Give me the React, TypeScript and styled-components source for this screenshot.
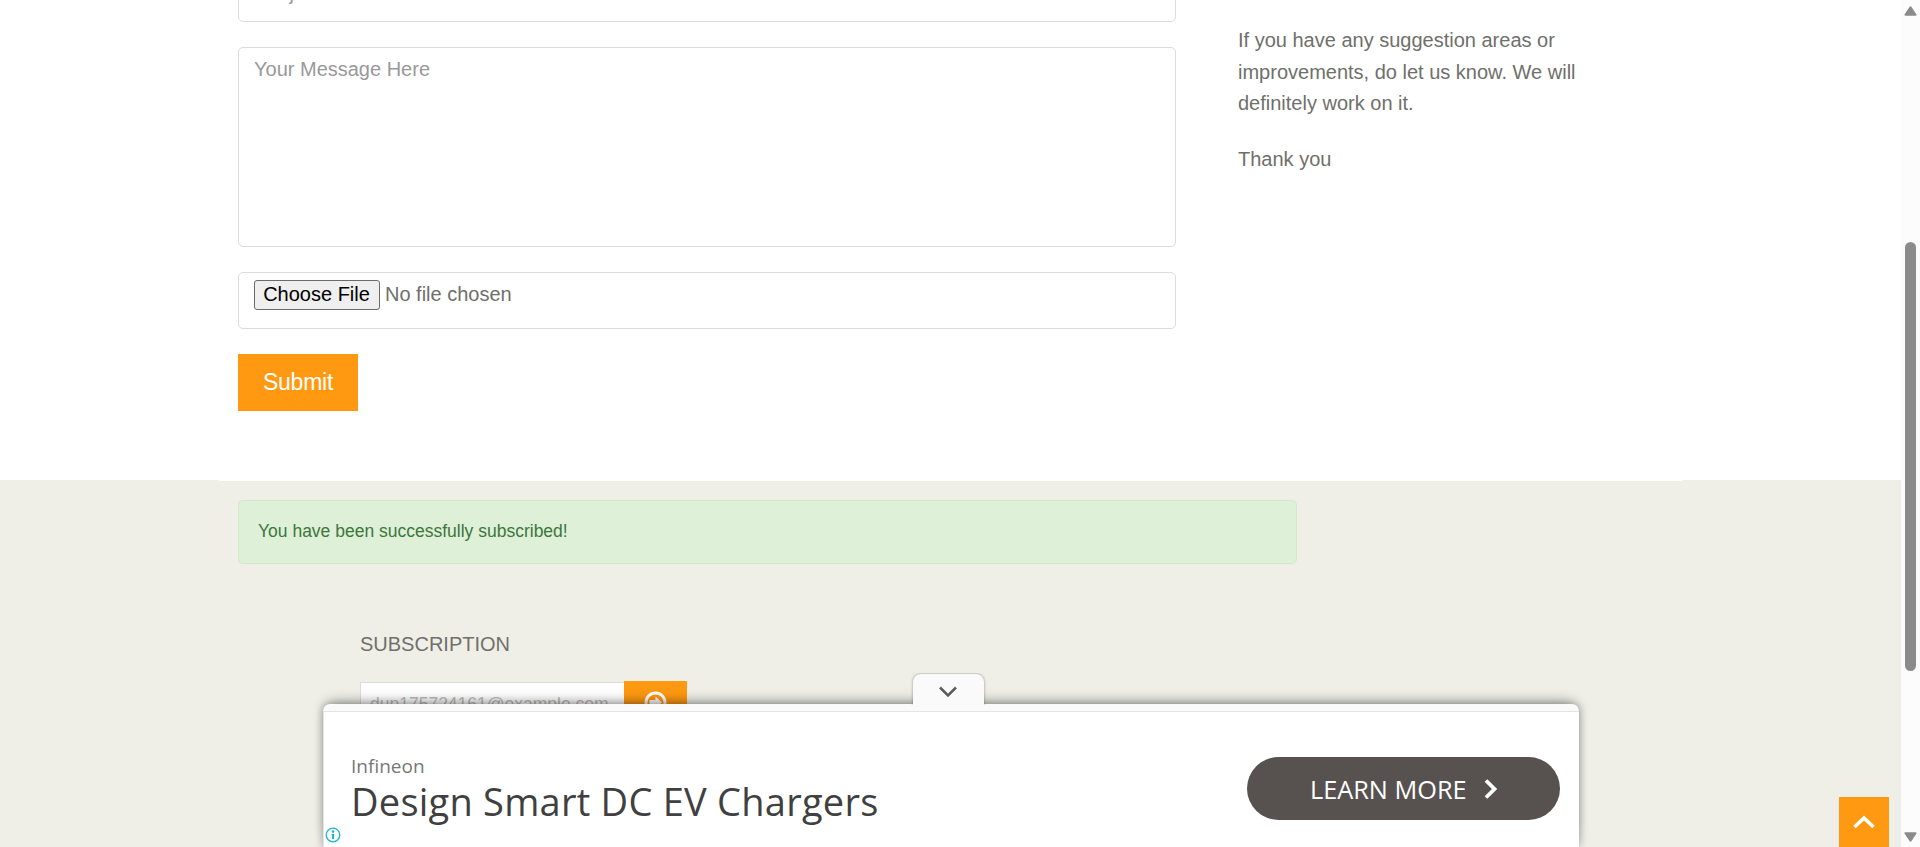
import React from 'react';
import styled, { createGlobalStyle } from 'styled-components';

const GlobalStyle = createGlobalStyle`
  * { box-sizing: border-box; }
  body {
    margin: 0;
    overflow: hidden;
    background: #fff;
    color: #6f6f6b;
    font: 20px/31.4px 'Liberation Sans', Arial, sans-serif;
  }
`;

const Page = styled.div`
  position: relative;
  display: flex;
  height: 847px;
  overflow: hidden;
`;

const Content = styled.div`
  flex: 1;
  display: flex;
  flex-direction: column;
`;

const ContactSection = styled.main`
  display: flex;
  gap: 62px;
  height: 480px;
  padding-left: 238px;
`;

const Form = styled.form`
  display: flex;
  flex-direction: column;
  align-items: flex-start;
  gap: 25px;
  width: 938px;
  margin-top: -35px;
`;

const Field = styled.div<{ $height: number }>`
  flex: none;
  width: 100%;
  height: ${(p) => p.$height}px;
  border: 1px solid #dcdcdc;
  border-radius: 5px;
  background: #fff;
`;

const TextInput = styled.input`
  display: block;
  width: 100%;
  height: 54px;
  padding: 0 15px;
  border: 0;
  outline: 0;
  background: transparent;
  font: inherit;
  &::placeholder { color: #999; opacity: 1; }
`;

const MessageInput = styled.textarea`
  display: block;
  width: 100%;
  height: 100%;
  padding: 7px 15px;
  border: 0;
  outline: 0;
  resize: none;
  background: transparent;
  font: 20px/29px 'Liberation Sans', Arial, sans-serif;
  &::placeholder { color: #999; opacity: 1; }
`;

const FileRow = styled.div`
  display: flex;
  align-items: center;
  gap: 5px;
  padding: 7px 15px;
  line-height: 28px;
`;

const FileButton = styled.button`
  width: 126px;
  height: 30px;
  padding: 0 1px 2px 0;
  border: 1px solid #6b6b6b;
  border-radius: 3px;
  background: #efefef;
  color: #000;
  font: 20px/26px 'Liberation Sans', Arial, sans-serif;
`;

const FileStatus = styled.span`
  position: relative;
  top: -1px;
`;

const SubmitButton = styled.button`
  width: 120px;
  height: 57px;
  padding: 0 0 1px;
  border: 0;
  background: #ff9911;
  color: #fff;
  font: 23px 'Liberation Sans', Arial, sans-serif;
  letter-spacing: -0.25px;
`;

const Aside = styled.aside`
  width: 370px;
  padding-top: 25.3px;
  p { margin: 0 0 24.7px; }
`;

const Subscribe = styled.section`
  flex: 1;
  padding-left: 219px;
  background: #efefe8;
`;

const Seam = styled.div`
  width: 1463px;
  height: 1px;
  background: #fff;
`;

const Alert = styled.div`
  width: 1059px;
  height: 64px;
  margin: 19px 0 0 19px;
  padding: 15px 19px;
  border: 1px solid #d4e9c4;
  border-radius: 5px;
  background: #dff0d8;
  color: #3c763d;
  font-size: 17.5px;
`;

const Newsletter = styled.div`
  padding: 64px 0 0 141px;
`;

const Heading = styled.h4`
  margin: 0;
  font-size: 20px;
  font-weight: 400;
  line-height: 32px;
`;

const NewsletterRow = styled.div`
  display: flex;
  align-items: flex-start;
  margin-top: 21px;
`;

const EmailBox = styled.div`
  width: 264px;
  height: 45px;
  margin-top: 1px;
  padding: 6px 9px;
  border: 1px solid #dcdcdc;
  border-right: 0;
  background: #fff;
  color: #bdbdb9;
  font-size: 17.5px;
`;

const GoButton = styled.button`
  display: flex;
  justify-content: center;
  width: 63px;
  height: 47px;
  padding: 10px 0 0;
  border: 0;
  background: #ff9911;
`;

const Scrollbar = styled.div`
  display: flex;
  flex-direction: column;
  align-items: center;
  width: 19px;
  padding: 6px 0 5px 0;
  background: #fcfcfc;
  svg { flex: none; display: block; }
`;

const Thumb = styled.div`
  width: 11px;
  height: 429px;
  margin: 226px 0 161px;
  border-radius: 6px;
  background: #8b8b8b;
`;

const AdShell = styled.div`
  position: absolute;
  left: 323px;
  bottom: 0;
  width: 1256px;
  height: 143px;
  border-radius: 7px 7px 0 0;
  background: #fafafa;
  box-shadow: 0 -7px 15px -6px rgba(0, 0, 0, 0.32), 0 0 9px rgba(0, 0, 0, 0.35);
`;

const AdTab = styled.div`
  position: absolute;
  left: 590px;
  top: -30px;
  display: flex;
  justify-content: center;
  width: 71px;
  height: 31px;
  padding: 12px 1px 0 0;
  border-radius: 8px 8px 0 0;
  background: #fafafa;
  box-shadow: 0 0 3px rgba(0, 0, 0, 0.4);
  clip-path: inset(-1px -4px 0 -4px);
`;

const AdBody = styled.div`
  display: flex;
  justify-content: space-between;
  height: 136px;
  margin-top: 7px;
  padding: 0 19px 0 27px;
  border: solid #e4e4e4;
  border-width: 1px 0 0 1px;
  background: #fff;
  font-family: 'Open Sans', 'Noto Sans', sans-serif;
`;

const AdCopy = styled.div`
  padding-top: 41px;
`;

const Advertiser = styled.div`
  color: #777;
  font-size: 19px;
  line-height: 26px;
`;

const Headline = styled.div`
  color: #404040;
  font-size: 38px;
  line-height: 44px;
  letter-spacing: 0.24px;
  white-space: nowrap;
`;

const LearnMore = styled.div`
  display: flex;
  align-items: center;
  gap: 17px;
  width: 313px;
  height: 63px;
  margin-top: 45px;
  padding: 1px 0 0 63px;
  border-radius: 32px;
  background: #575250;
  color: #fff;
  font-size: 25.3px;
  line-height: 34px;
  white-space: nowrap;
`;

const AdInfo = styled.svg`
  position: absolute;
  left: 2px;
  bottom: 4px;
`;

const BackToTop = styled.div`
  position: absolute;
  left: 1839px;
  bottom: 0;
  display: flex;
  justify-content: center;
  width: 50px;
  height: 50px;
  padding-top: 18px;
  background: #ff9911;
`;

export default function App() {
  return (
    <Page>
      <GlobalStyle />
      <Content>
        <ContactSection>
          <Form>
            <Field $height={57}>
              <TextInput placeholder="Subject" />
            </Field>
            <Field $height={200}>
              <MessageInput placeholder="Your Message Here" />
            </Field>
            <Field $height={57}>
              <FileRow>
                <FileButton type="button">Choose File</FileButton>
                <FileStatus>No file chosen</FileStatus>
              </FileRow>
            </Field>
            <SubmitButton type="button">Submit</SubmitButton>
          </Form>
          <Aside>
            <p>If you have any suggestion areas or improvements, do let us know. We will definitely work on it.</p>
            <p>Thank you</p>
          </Aside>
        </ContactSection>
        <Subscribe>
          <Seam />
          <Alert>You have been successfully subscribed!</Alert>
          <Newsletter>
            <Heading>SUBSCRIPTION</Heading>
            <NewsletterRow>
              <EmailBox>dup175724161@example.com</EmailBox>
              <GoButton type="button" aria-label="Subscribe">
                <svg width="23" height="23" viewBox="0 0 23 23">
                  <circle cx="11.5" cy="11.5" r="9.5" fill="none" stroke="#fff" strokeWidth="3" />
                  <path d="M5.500 9h6V5.500l6.500 6-6.500 6V14H5.500z" fill="#fff" />
                </svg>
              </GoButton>
            </NewsletterRow>
          </Newsletter>
        </Subscribe>
      </Content>
      <Scrollbar>
        <svg width="13" height="10" viewBox="0 0 13 10">
          <path d="M6.500 1.200 11.500 8.800H1.500z" fill="#8b8b8b" stroke="#8b8b8b" strokeWidth="2" strokeLinejoin="round" />
        </svg>
        <Thumb />
        <svg width="13" height="10" viewBox="0 0 13 10">
          <path d="M6.500 8.800 1.500 1.200h10z" fill="#8b8b8b" stroke="#8b8b8b" strokeWidth="2" strokeLinejoin="round" />
        </svg>
      </Scrollbar>
      <AdShell>
        <AdTab>
          <svg width="20" height="12" viewBox="0 0 20 12">
            <path d="M2 1.500 10 9.500 18 1.500" fill="none" stroke="#5c5c5c" strokeWidth="2.500" />
          </svg>
        </AdTab>
        <AdBody>
          <AdCopy>
            <Advertiser>Infineon</Advertiser>
            <Headline>Design Smart DC EV Chargers</Headline>
          </AdCopy>
          <LearnMore>
            <span>LEARN MORE</span>
            <svg width="14" height="20" viewBox="0 0 14 20">
              <path d="M2 1.500 10.500 10 2 18.500" fill="none" stroke="#fff" strokeWidth="3.800" />
            </svg>
          </LearnMore>
        </AdBody>
        <AdInfo width="16" height="16" viewBox="0 0 16 16">
          <circle cx="8" cy="8" r="6.800" fill="none" stroke="#1cb8d2" strokeWidth="1.300" />
          <circle cx="8" cy="4.600" r="1.300" fill="#1cb8d2" />
          <path d="M6.500 7h2.500v5H7V8h-.5z" fill="#1cb8d2" />
        </AdInfo>
      </AdShell>
      <BackToTop>
        <svg width="22" height="15" viewBox="0 0 22 15">
          <path d="M1.500 12 11 3 20.500 12" fill="none" stroke="#fff" strokeWidth="3.500" />
        </svg>
      </BackToTop>
    </Page>
  );
}
